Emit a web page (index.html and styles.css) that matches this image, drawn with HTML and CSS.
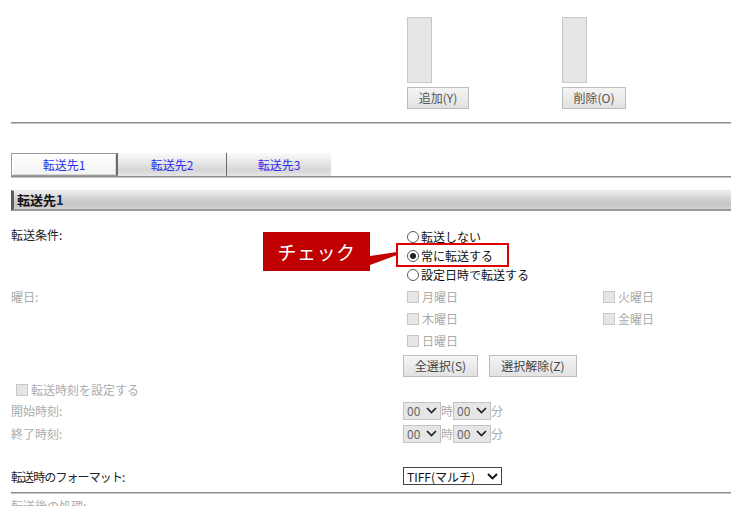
FILE: index.html
```html
<!DOCTYPE html>
<html lang="ja">
<head>
<meta charset="utf-8">
<link rel="stylesheet" href="styles.css">
</head>
<body>
<div class="page">
  <div class="top">
    <div class="top-col">
      <div class="listbox"></div>
      <span class="btn btn-top">追加(Y)</span>
    </div>
    <div class="top-col">
      <div class="listbox"></div>
      <span class="btn btn-top btn-del">削除(O)</span>
    </div>
  </div>
  <div class="rule"></div>
  <div class="tabs">
    <div class="tab tab-active">転送先1</div>
    <div class="tab tab-2">転送先2</div>
    <div class="tab tab-3">転送先3</div>
  </div>
  <div class="rule"></div>
  <div class="section-head">転送先<span class="num">1</span></div>

  <div class="row row-cond">
    <div class="label">転送条件:</div>
    <div class="field radios">
      <div class="radio-line"><span class="radio"></span>転送しない</div>
      <div class="radio-line"><span class="radio checked"></span>常に転送する</div>
      <div class="radio-line"><span class="radio"></span>設定日時で転送する</div>
    </div>
    <div class="callout">チェック</div>
    <svg class="callout-tail" width="30" height="16" viewBox="0 0 30 16"><polygon points="0,4 27,0 27,3 0,13" fill="#c00000"/></svg>
    <div class="highlight"></div>
  </div>

  <div class="row row-days">
    <div class="label dim">曜日:</div>
    <div class="field">
      <div class="days">
        <div class="chk-line"><span class="chk"></span>月曜日</div>
        <div class="chk-line"><span class="chk"></span>火曜日</div>
        <div class="chk-line"><span class="chk"></span>木曜日</div>
        <div class="chk-line"><span class="chk"></span>金曜日</div>
        <div class="chk-line"><span class="chk"></span>日曜日</div>
      </div>
      <div class="btn-row">
        <span class="btn btn-sel">全選択(S)</span>
        <span class="btn btn-clr">選択解除(Z)</span>
      </div>
    </div>
  </div>

  <div class="row-time-set"><span class="chk"></span>転送時刻を設定する</div>

  <div class="row row-time">
    <div class="label dim">開始時刻:</div>
    <div class="field time-field">
      <span class="sel sel-dis">00<svg class="chev" width="11" height="7" viewBox="0 0 11 7"><polyline points="1,1 5.5,5.5 10,1" fill="none" stroke="#222" stroke-width="1.7"/></svg></span><span class="unit">時</span><span class="sel sel-dis">00<svg class="chev" width="11" height="7" viewBox="0 0 11 7"><polyline points="1,1 5.5,5.5 10,1" fill="none" stroke="#222" stroke-width="1.7"/></svg></span><span class="unit">分</span>
    </div>
  </div>
  <div class="row row-time">
    <div class="label dim">終了時刻:</div>
    <div class="field time-field">
      <span class="sel sel-dis">00<svg class="chev" width="11" height="7" viewBox="0 0 11 7"><polyline points="1,1 5.5,5.5 10,1" fill="none" stroke="#222" stroke-width="1.7"/></svg></span><span class="unit">時</span><span class="sel sel-dis">00<svg class="chev" width="11" height="7" viewBox="0 0 11 7"><polyline points="1,1 5.5,5.5 10,1" fill="none" stroke="#222" stroke-width="1.7"/></svg></span><span class="unit">分</span>
    </div>
  </div>

  <div class="row row-format">
    <div class="label label-tight">転送時のフォーマット:</div>
    <div class="field time-field">
      <span class="sel sel-fmt">TIFF(マルチ)<svg class="chev" width="11" height="7" viewBox="0 0 11 7"><polyline points="1,1 5.5,5.5 10,1" fill="none" stroke="#111" stroke-width="1.9"/></svg></span>
    </div>
  </div>
  <div class="rule rule-bottom"></div>
  <div class="row-after dim">転送後の処理:</div>
</div>
</body>
</html>
```

FILE: styles.css
```css
* { box-sizing: border-box; }
html, body { margin: 0; padding: 0; background: #fff; }
body {
  font-family: "Noto Sans CJK JP", "Noto Sans", sans-serif;
  font-size: 12px;
  color: #222;
  overflow: hidden;
}
.page {
  width: 731px;
  padding-left: 11px;
}
.top {
  display: flex;
  height: 122px;
  padding-left: 396px;
}
.top-col {
  width: 155px;
  display: flex;
  flex-direction: column;
  align-items: flex-start;
}
.listbox {
  margin-top: 17px;
  width: 25px;
  height: 66px;
  background: #e6e6e6;
  border: 1px solid #c8c8c8;
}
.btn {
  display: inline-flex;
  align-items: center;
  justify-content: center;
  height: 22px;
  border: 1px solid #bdbdbd;
  background: linear-gradient(#f4f4f4, #e2e2e2);
  color: #444;
  font-size: 12px;
  line-height: 1;
}
.btn-top { margin-top: 4px; width: 62px; color: #555; }
.btn-del { width: 64px; }
.rule {
  height: 2px;
  border-top: 1px solid #8c8c8c;
  border-bottom: 1px solid #c4c4c4;
}
.tabs {
  display: flex;
  margin-top: 29px;
  height: 23px;
}
.tab {
  display: flex;
  align-items: center;
  justify-content: center;
  color: #2b2bf0;
  font-size: 12px;
}
.tab-active {
  width: 107px;
  background: linear-gradient(#ffffff, #f2f2f2);
  border: 1px solid #9a9a9a;
  border-right: 2px solid #6a6a6a;
  box-shadow: inset 1px 1px 0 #fff, inset -1px -1px 0 #d8d8d8;
}
.tab-2, .tab-3 {
  background: linear-gradient(#fbfbfb 0%, #ececec 30%, #d6d6d6 75%, #e6e6e6 100%);
}
.tab-2 { width: 108px; }
.tab-3 { width: 105px; border-left: 1px solid #6a6a6a; }
.section-head {
  margin-top: 12px;
  height: 21px;
  border-left: 3px solid #5c5c5c;
  border-top: 1px solid #e8e8e8;
  border-bottom: 2px solid #9a9a9a;
  background: linear-gradient(#eeeeee 0%, #d6d6d6 35%, #c6c6c6 75%, #d2d2d2 100%);
  font-weight: bold;
  font-size: 13px;
  line-height: 18px;
  padding-left: 3px;
  color: #111;
}
.section-head .num { color: #0b2a5a; }
.row {
  display: flex;
  position: relative;
}
.label {
  width: 392px;
  flex: none;
  color: #222;
}
.label-tight { letter-spacing: -0.9px; }
.dim { color: #ababab; }
.field { flex: 1; }
.row-cond { margin-top: 16px; line-height: 19px; }
.row-cond .label { line-height: 16px; }
.radio-line {
  display: flex;
  align-items: center;
  height: 19px;
  padding-left: 4px;
  color: #111;
}
.radio {
  width: 12px;
  height: 12px;
  border-radius: 50%;
  border: 1px solid #5a5a5a;
  background: #fff;
  margin-right: 2px;
  display: inline-flex;
  align-items: center;
  justify-content: center;
}
.radio.checked::after {
  content: "";
  width: 6px;
  height: 6px;
  border-radius: 50%;
  background: #222;
}
.callout {
  position: absolute;
  left: 252px;
  top: 5px;
  width: 107px;
  height: 39px;
  background: #c00000;
  color: #fff;
  font-size: 19px;
  display: flex;
  align-items: center;
  justify-content: center;
  letter-spacing: 0.5px;
}
.callout-tail {
  position: absolute;
  left: 359px;
  top: 25px;
}
.highlight {
  position: absolute;
  left: 385px;
  top: 16px;
  width: 113px;
  height: 24px;
  border: 2px solid #e00000;
}
.row-days { margin-top: 2px; line-height: 22px; }
.days {
  display: grid;
  grid-template-columns: 196px 196px;
  padding-left: 4px;
}
.chk-line {
  display: flex;
  align-items: center;
  height: 22px;
  color: #ababab;
}
.chk {
  width: 12px;
  height: 12px;
  border: 1px solid #c6c6c6;
  background: #e6e6e6;
  margin-right: 3px;
  flex: none;
}
.btn-row {
  display: flex;
  gap: 11px;
  margin-top: 3px;
}
.btn-sel { width: 75px; }
.btn-clr { width: 88px; }
.row-time-set {
  display: flex;
  align-items: center;
  height: 19px;
  margin-top: 3px;
  padding-left: 5px;
  color: #ababab;
}
.row-time { height: 23px; align-items: center; }
.time-field { display: flex; align-items: center; }
.sel {
  display: inline-flex;
  align-items: center;
  justify-content: space-between;
  height: 18px;
  padding: 0 3px 0 3px;
  font-size: 12px;
}
.sel-dis {
  width: 38px;
  background: #e6e6e6;
  border: 1px solid #c4c4c4;
  color: #666;
}
.unit { color: #ababab; width: 12px; }
.row-format { margin-top: 20px; height: 22px; align-items: center; }
.sel-fmt {
  width: 99px;
  background: #fff;
  border: 1px solid #444;
  color: #111;
}
.rule-bottom { margin-top: 5px; }
.row-after {
  margin-top: 4px;
  line-height: 16px;
}
```
